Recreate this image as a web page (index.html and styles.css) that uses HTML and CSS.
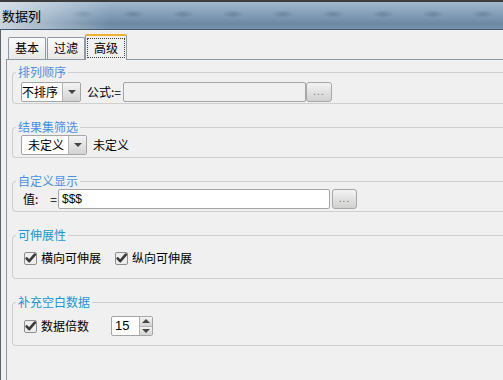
FILE: index.html
```html
<!DOCTYPE html>
<html lang="zh">
<head>
    <meta charset="UTF-8">
    <meta name="viewport" content="width=device-width, initial-scale=1.0">
    <title>数据列</title>
    <link rel="stylesheet" href="styles.css">
</head>
<body>
    <div class="window">
        <div class="titlebar">
            <span class="title">数据列</span>
        </div>

        <div class="frame">
            <div class="tabs">
                <div class="tab">基本</div>
                <div class="tab">过滤</div>
                <div class="tab tab-active"><span class="focus">高级</span></div>
            </div>

            <div class="panel">
                <fieldset class="group">
                    <legend>排列顺序</legend>
                    <div class="row row-tight">
                        <div class="combo combo-sort">
                            <span class="combo-text">不排序</span>
                            <span class="combo-btn"><span class="arrow-down"></span></span>
                        </div>
                        <span class="label label-formula">公式:=</span>
                        <div class="input input-disabled input-formula"></div>
                        <button class="dots">...</button>
                    </div>
                </fieldset>

                <fieldset class="group">
                    <legend>结果集筛选</legend>
                    <div class="row">
                        <div class="combo combo-filter">
                            <span class="combo-text">未定义</span>
                            <span class="combo-btn"><span class="arrow-down"></span></span>
                        </div>
                        <span class="label label-filter">未定义</span>
                    </div>
                </fieldset>

                <fieldset class="group">
                    <legend>自定义显示</legend>
                    <div class="row">
                        <span class="label-value"><span>值:</span><span>=</span></span>
                        <div class="input input-value">$$$</div>
                        <button class="dots dots-value">...</button>
                    </div>
                </fieldset>

                <fieldset class="group group-stretch">
                    <legend>可伸展性</legend>
                    <div class="row row-checks">
                        <label class="check">
                            <svg width="13" height="13" viewBox="0 0 13 13"><rect x="0.5" y="0.5" width="12" height="12" rx="1.5" fill="#eeeeee" stroke="#8f8f8f"/><path d="M2.6 6.4 L5.2 9.2 L10.8 2.6" fill="none" stroke="#3a3a3a" stroke-width="2.6" stroke-linecap="round" stroke-linejoin="round"/></svg>
                            横向可伸展
                        </label>
                        <label class="check">
                            <svg width="13" height="13" viewBox="0 0 13 13"><rect x="0.5" y="0.5" width="12" height="12" rx="1.5" fill="#eeeeee" stroke="#8f8f8f"/><path d="M2.6 6.4 L5.2 9.2 L10.8 2.6" fill="none" stroke="#3a3a3a" stroke-width="2.6" stroke-linecap="round" stroke-linejoin="round"/></svg>
                            纵向可伸展
                        </label>
                    </div>
                </fieldset>

                <fieldset class="group group-fill">
                    <legend>补充空白数据</legend>
                    <div class="row row-checks">
                        <label class="check">
                            <svg width="13" height="13" viewBox="0 0 13 13"><rect x="0.5" y="0.5" width="12" height="12" rx="1.5" fill="#eeeeee" stroke="#8f8f8f"/><path d="M2.6 6.4 L5.2 9.2 L10.8 2.6" fill="none" stroke="#3a3a3a" stroke-width="2.6" stroke-linecap="round" stroke-linejoin="round"/></svg>
                            数据倍数
                        </label>
                        <div class="spin">
                            <span class="spin-value">15</span>
                            <span class="spin-btns">
                                <span class="spin-btn"><span class="arrow-up"></span></span>
                                <span class="spin-btn"><span class="arrow-down"></span></span>
                            </span>
                        </div>
                    </div>
                </fieldset>
            </div>
        </div>
    </div>
</body>
</html>
```

FILE: styles.css
```css
* {
    margin: 0;
    padding: 0;
    box-sizing: border-box;
}
body {
    background-color: #f0f0f0;
    font-family: "Noto Sans CJK SC", "Liberation Sans", sans-serif;
    font-size: 12px;
    line-height: 12px;
    color: #000;
    overflow: hidden;
    width: 503px;
    height: 380px;
}
.window {
    width: 503px;
    height: 380px;
}
.titlebar {
    height: 30px;
    border-top: 2px solid #3c3c3c;
    border-bottom: 1px solid #45586c;
    background:
        linear-gradient(to right, rgba(232, 236, 240, 0.75) 0, rgba(232, 236, 240, 0) 110px),
        radial-gradient(ellipse 11px 4px at center, rgba(55, 75, 98, 0.3), rgba(55, 75, 98, 0)) 58px 5px / 50px 14px repeat-x,
        linear-gradient(#a2b8cc, #86a1bb 40%, #6c89a5 80%, #7793ad);
}
.title {
    display: block;
    padding-left: 2px;
    font-size: 13px;
    line-height: 27px;
}
.frame {
    height: 350px;
    border-left: 1px solid #5a6470;
    padding: 4px 0 0 5px;
}
.tabs {
    display: flex;
    align-items: flex-end;
    height: 26px;
    padding-left: 2px;
    margin-bottom: -1px;
}
.tab {
    width: 38px;
    height: 22px;
    margin: 0 1px 1px 0;
    border: 1px solid #8d99a6;
    border-bottom: none;
    border-radius: 2px 2px 0 0;
    background: linear-gradient(#fbfbfb, #e8e8e8);
    text-align: center;
    line-height: 20px;
}
.tab-active {
    position: relative;
    z-index: 1;
    width: 42px;
    height: 26px;
    margin: 0 0 0 -1px;
    border-top: 2px solid #f0b030;
    background: #f0f0f0;
}
.focus {
    display: block;
    height: 20px;
    margin: 2px 1px 0;
    border: 1px dotted #444;
    line-height: 18px;
}
.panel {
    height: 321px;
    border-top: 1px solid #8d99a6;
    border-left: 1px solid #8d99a6;
    padding: 6px 0 0 5px;
}
.group {
    margin: 0 0 17px;
    padding: 0 0 0 3px;
    border: 1px solid #cfcfcf;
    border-right: none;
    border-radius: 4px 0 0 4px;
    min-width: 0;
}
.group legend {
    padding: 0 2px;
    line-height: 12px;
    color: #4a90e2;
}
.group-stretch legend,
.group-fill legend {
    color: #1a96d4;
}
.row {
    display: flex;
    align-items: center;
    height: 24px;
    margin-left: 5px;
    padding: 2px 0;
    white-space: nowrap;
}
.row-tight {
    height: 25px;
    padding: 4px 0 1px;
}
.group-stretch .row {
    height: 37px;
    padding: 7px 0 10px;
}
.group-fill .row {
    height: 37px;
    padding: 8px 0 9px;
}
.combo {
    display: flex;
    height: 20px;
    border: 1px solid #a5a5a5;
    border-radius: 2px;
    background: #fff;
}
.combo-sort {
    width: 60px;
}
.combo-filter {
    width: 66px;
}
.combo-text {
    flex: 1;
    line-height: 18px;
}
.combo-filter .combo-text {
    padding-left: 6px;
}
.combo-btn {
    display: flex;
    align-items: center;
    justify-content: center;
    width: 18px;
    border-left: 1px solid #b3b3b3;
    border-radius: 0 1px 1px 0;
    background: linear-gradient(#f4f4f4, #d3d3d3);
}
.arrow-down {
    width: 0;
    height: 0;
    border-left: 4px solid transparent;
    border-right: 4px solid transparent;
    border-top: 4px solid #454545;
}
.arrow-up {
    width: 0;
    height: 0;
    border-left: 4px solid transparent;
    border-right: 4px solid transparent;
    border-bottom: 4px solid #454545;
}
.label-formula {
    flex: none;
    width: 42px;
    padding-left: 6px;
}
.label-filter {
    margin-left: 6px;
}
.input {
    flex: none;
    height: 20px;
    border: 1px solid #a5a5a5;
    border-radius: 2px;
    background: #fff;
}
.input-disabled {
    background: #f0f0f0;
}
.input-formula {
    width: 183px;
}
.dots {
    flex: none;
    width: 26px;
    height: 20px;
    border: 1px solid #a8a8a8;
    border-radius: 3px;
    background: linear-gradient(#f3f3f3, #d0d0d0);
    font-family: "Liberation Sans", sans-serif;
    font-size: 10px;
    line-height: 14px;
    letter-spacing: 1px;
    color: #777;
}
.label-value {
    display: flex;
    justify-content: space-between;
    width: 37px;
    padding: 0 1px 0 2px;
}
.input-value {
    width: 272px;
    padding-left: 3px;
    font-family: "Liberation Sans", sans-serif;
    font-size: 12px;
    line-height: 18px;
}
.dots-value {
    width: 25px;
    margin-left: 2px;
    color: #8a5a5a;
}
.row-checks {
    margin-left: 8px;
}
.check {
    display: flex;
    align-items: center;
    gap: 4px;
}
.check + .check {
    margin-left: 14px;
}
.spin {
    display: flex;
    width: 42px;
    height: 20px;
    margin-left: 22px;
    border: 1px solid #a5a5a5;
    border-radius: 2px;
    background: #fff;
}
.spin-value {
    flex: 1;
    padding-left: 3px;
    font-family: "Liberation Sans", sans-serif;
    font-size: 13px;
    line-height: 18px;
}
.spin-btns {
    display: flex;
    flex-direction: column;
    width: 13px;
    border-left: 1px solid #b3b3b3;
}
.spin-btn {
    flex: 1;
    display: flex;
    align-items: center;
    justify-content: center;
    background: linear-gradient(#f4f4f4, #d3d3d3);
}
.spin-btn + .spin-btn {
    border-top: 1px solid #b3b3b3;
}
```
